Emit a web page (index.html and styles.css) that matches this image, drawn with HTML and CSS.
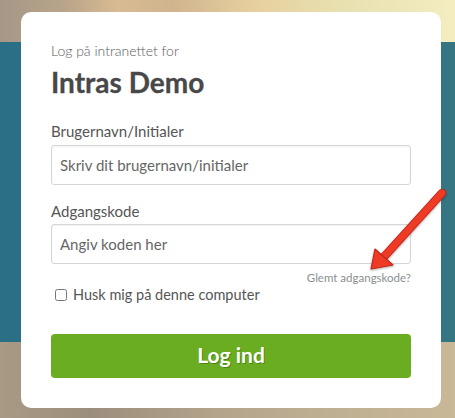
FILE: index.html
```html
<!DOCTYPE html>
<html lang="da">
<head>
<meta charset="utf-8">
<title>Log på Intras Demo</title>
<link rel="stylesheet" href="styles.css">
</head>
<body>
<div class="page">
  <div class="band-top"></div>
  <div class="band-mid"></div>
  <div class="band-bottom"></div>
  <form class="card">
    <p class="intro">Log på intranettet for</p>
    <h1 class="title">Intras Demo</h1>
    <label class="field-label" for="user">Brugernavn/Initialer</label>
    <input class="field" id="user" type="text" placeholder="Skriv dit brugernavn/initialer">
    <label class="field-label pw-label" for="pw">Adgangskode</label>
    <input class="field pw-field" id="pw" type="password" placeholder="Angiv koden her">
    <a class="forgot" href="#">Glemt adgangskode?</a>
    <label class="remember"><input type="checkbox" class="check"><span>Husk mig på denne computer</span></label>
    <button class="submit" type="button">Log ind</button>
  </form>
  <svg class="arrow" width="90" height="100" viewBox="0 0 90 100">
    <defs>
      <filter id="sh" x="-30%" y="-30%" width="160%" height="160%">
        <feDropShadow dx="0" dy="1" stdDeviation="1.2" flood-color="#000" flood-opacity="0.35"/>
      </filter>
    </defs>
    <g filter="url(#sh)">
      <line x1="82" y1="14" x2="22" y2="80" stroke="#c22618" stroke-width="8.5" stroke-linecap="round"/>
      <line x1="82" y1="14" x2="22" y2="80" stroke="#ef3b27" stroke-width="6.5" stroke-linecap="round"/>
      <polygon points="11,90 15,70 33,86" fill="#ef3b27" stroke="#c22618" stroke-width="1.2" stroke-linejoin="round"/>
    </g>
  </svg>
</div>
</body>
</html>
```
FILE: styles.css
```css
* { box-sizing: border-box; }
html, body { margin: 0; padding: 0; }
body {
  width: 455px;
  height: 418px;
  overflow: hidden;
  font-family: "Lato", "Open Sans", sans-serif;
  color: #555;
}
.page {
  position: relative;
  width: 455px;
  height: 418px;
  display: flex;
  flex-direction: column;
}
.band-top {
  height: 42px;
  flex: none;
  background: linear-gradient(90deg, #a59886 0%, #b8a48a 14%, #d8bb92 26%, #d0b48e 38%, #e6cf9e 55%, #e9e0b0 75%, #f3edc0 100%);
}
.band-mid {
  height: 300px;
  flex: none;
  background: linear-gradient(90deg, #2a6f85 0%, #2e7285 60%, #367682 100%);
}
.band-bottom {
  flex: 1;
  background: linear-gradient(90deg, #a99a86 0%, #9c8e7c 20%, #b5a58c 50%, #c2b294 80%, #c8b898 100%);
}
.card {
  position: absolute;
  left: 21px;
  top: 12px;
  width: 420px;
  height: 396px;
  background: #fff;
  border-radius: 10px;
  padding: 29px 30px 0 30px;
  display: flex;
  flex-direction: column;
  margin: 0;
}
.intro {
  margin: 0;
  font-size: 14px;
  font-weight: 300;
  line-height: 20px;
  color: #5a5a5a;
}
.title {
  margin: 4px 0 0 0;
  font-size: 28px;
  line-height: 34px;
  font-weight: 700;
  color: #484848;
  -webkit-text-stroke: 0.3px #484848;
}
.field-label {
  margin-top: 22px;
  font-size: 15px;
  line-height: 20px;
  color: #555;
}
.pw-label { margin-top: 16px; }
.field {
  margin-top: 4px;
  height: 40px;
  width: 360px;
  border: 1px solid #d6d6d6;
  border-radius: 3px;
  padding: 0 8px;
  font-family: inherit;
  font-size: 15px;
  color: #555;
  box-shadow: inset 0 1px 2px rgba(0,0,0,0.06);
}
.pw-field { margin-top: 3px; }
.field::placeholder { color: #666; opacity: 1; }
.forgot {
  align-self: flex-end;
  margin-top: 6.5px;
  font-size: 11.5px;
  line-height: 14px;
  color: #8a8f92;
  text-decoration: none;
}
.remember {
  display: flex;
  align-items: center;
  gap: 6px;
  margin-top: 0;
  padding-left: 4px;
  font-size: 14.5px;
  line-height: 20px;
  color: #555;
}
.check {
  margin: 0;
  width: 12px;
  height: 12px;
}
.submit {
  margin-top: 29px;
  height: 44px;
  width: 360px;
  border: none;
  border-radius: 4px;
  background: #6aad20;
  color: #fff;
  font-family: inherit;
  font-size: 21px;
  font-weight: 700;
  padding: 0 0 3px 0;
  text-shadow: 1px 1px 0 rgba(0,0,0,0.25);
}
.arrow {
  position: absolute;
  left: 360px;
  top: 179px;
}
```
